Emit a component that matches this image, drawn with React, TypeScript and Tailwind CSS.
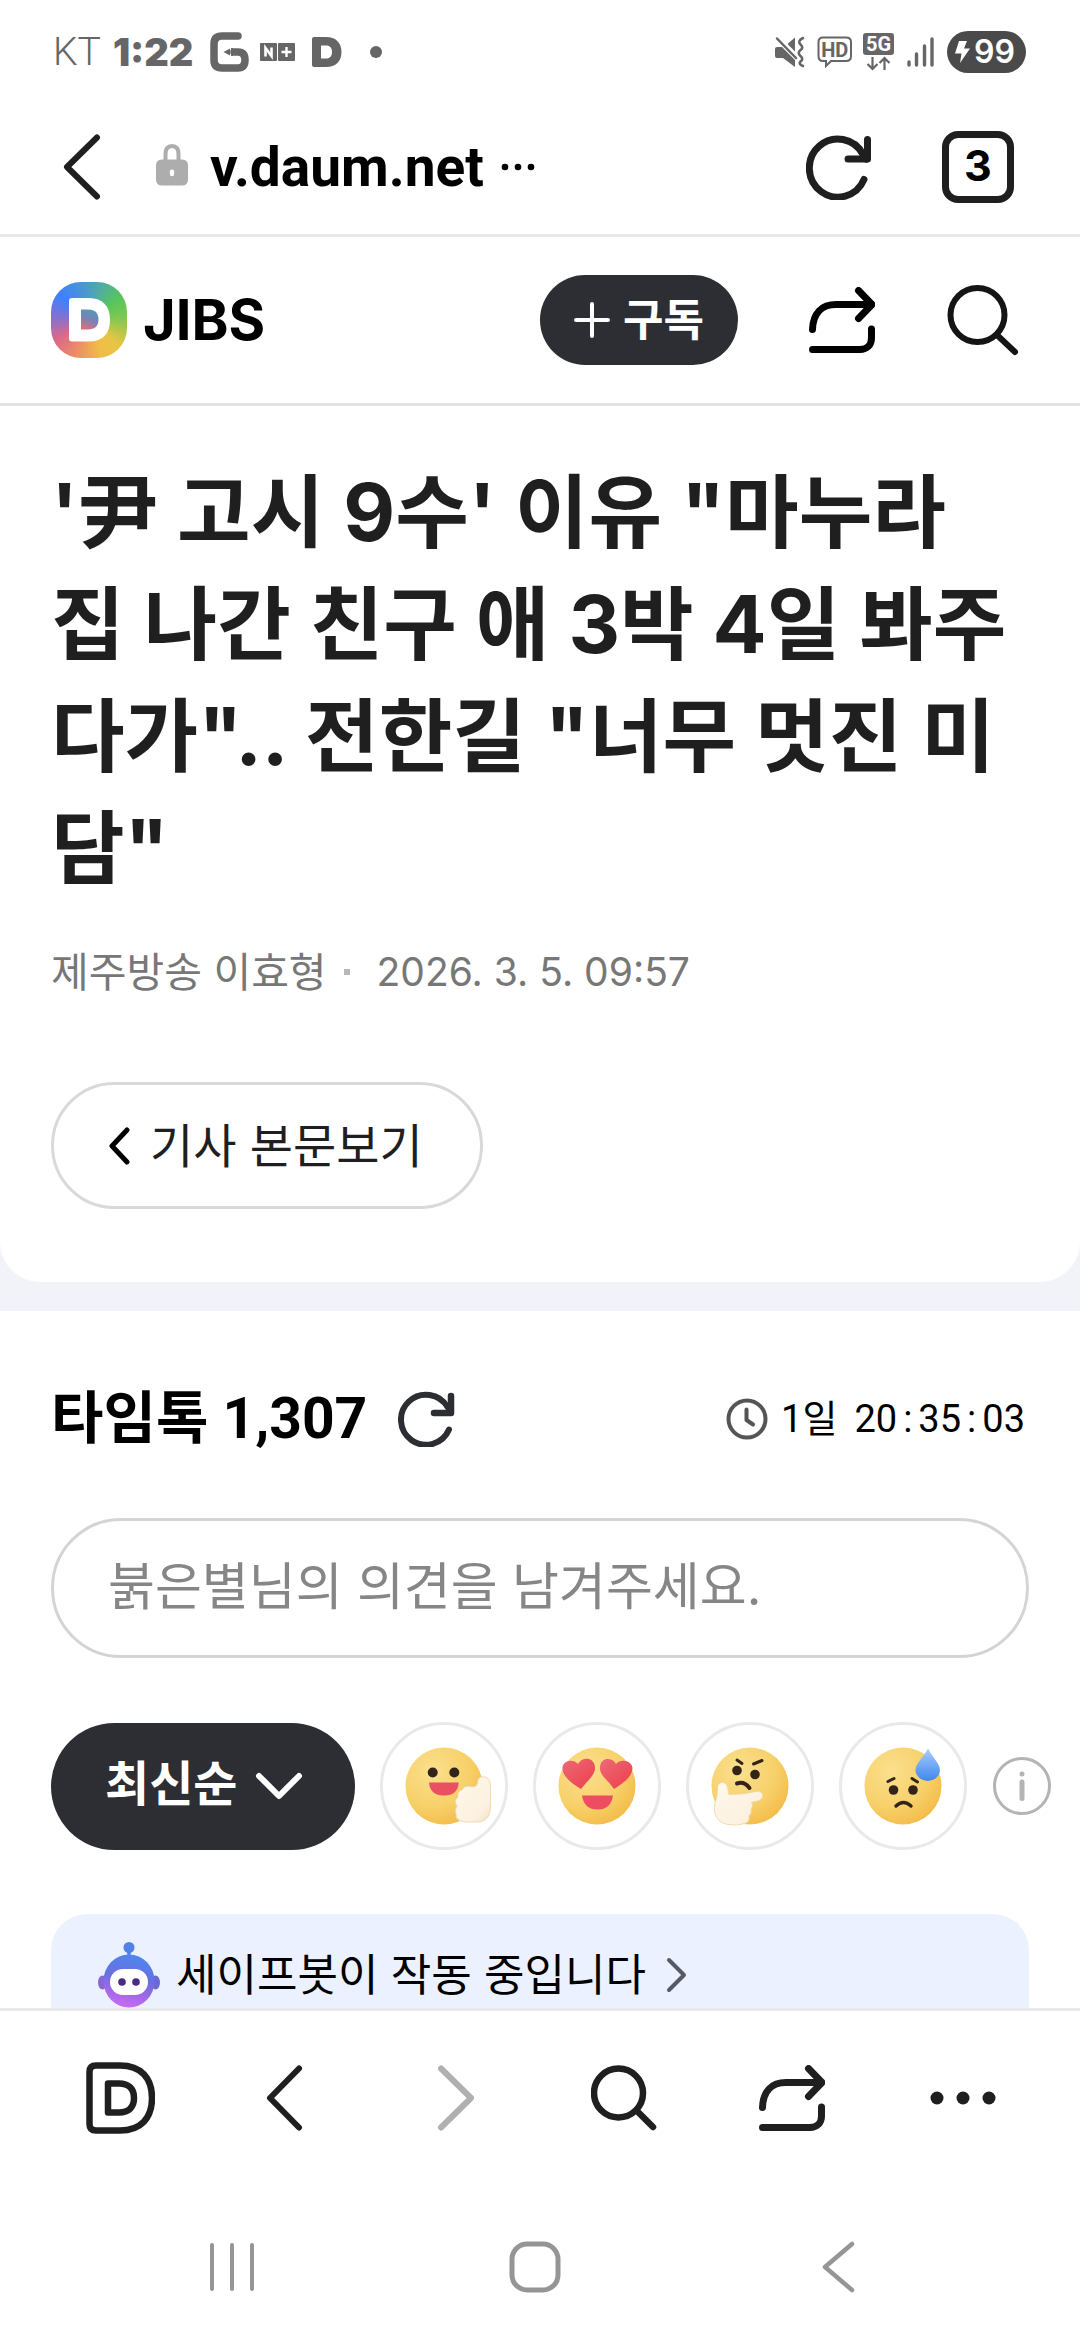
import React from "react";

type IconProps = { className?: string };

const SANS = "font-['Inter','Noto_Sans_CJK_KR',sans-serif]";
const ROBOTO = "font-['Roboto','Noto_Sans_CJK_KR',sans-serif]";

function Stroke({
  w,
  h,
  sw,
  className = "",
  children,
}: {
  w: number;
  h: number;
  sw: number;
  className?: string;
  children: React.ReactNode;
}) {
  return (
    <svg
      width={w}
      height={h}
      viewBox={`0 0 ${w} ${h}`}
      fill="none"
      stroke="currentColor"
      strokeWidth={sw}
      strokeLinecap="round"
      strokeLinejoin="round"
      className={`shrink-0 ${className}`}
      aria-hidden="true"
    >
      {children}
    </svg>
  );
}

function ReloadIcon() {
  return (
    <Stroke w={66} h={66} sw={7}>
      <path d="M58 45.5A28.5 29 0 1 1 57 20.500L60.500 25" />
      <path d="M61.500 5.500V25H42" />
    </Stroke>
  );
}

function ShareIcon({ className }: IconProps) {
  return (
    <Stroke w={66} h={66} sw={7} className={className}>
      <path d="M3.500 42.500C4 26 13 17.500 27 17.500H62" />
      <path d="M49.500 3.500L63 17.500L49.500 31.500" />
      <path d="M62.500 42V51C62.500 58 58 62.500 51 62.500H3.500" />
    </Stroke>
  );
}

function SearchIcon({ size }: { size: "lg" | "md" }) {
  if (size === "lg")
    return (
      <Stroke w={72} h={72} sw={6}>
        <circle cx="30.500" cy="31" r="27" />
        <path d="M50 51L68 68" />
      </Stroke>
    );
  return (
    <Stroke w={66} h={66} sw={6.5}>
      <circle cx="27.500" cy="28" r="24.500" />
      <path d="M46 46L62 62" />
    </Stroke>
  );
}

function StatusBar() {
  return (
    <div className={`flex h-[104px] shrink-0 items-center justify-between pl-[53px] pr-[54px] text-[#666666] ${ROBOTO}`}>
      <div className="flex items-center">
        <span className="text-[39px] font-light leading-[48px]">KT</span>
        <span className="ml-[12px] font-['Inter',sans-serif] text-[38px] font-black leading-[48px]">1:22</span>
        <svg width="40" height="40" viewBox="0 0 40 40" className="ml-[17px]" aria-hidden="true">
          <path d="M28 4H12Q4 4 4 12V28Q4 36 12 36H28Q35 36 35 28Q35 20 28 20H24" fill="none" stroke="currentColor" strokeWidth="7.500" strokeLinecap="round" />
          <path d="M13.500 20L20 16.500V23.500Z" fill="currentColor" />
          <path d="M22 16V24" stroke="currentColor" strokeWidth="2" strokeDasharray="2 1.500" />
        </svg>
        <svg width="36" height="18" viewBox="0 0 36 18" className="ml-[10px]" aria-hidden="true">
          <rect x="0" y="0" width="17" height="18" rx="1" fill="currentColor" />
          <rect x="18" y="0" width="17" height="18" rx="1" fill="currentColor" />
          <path d="M5.500 13.500V5L11.500 13V4.500" fill="none" stroke="#fff" strokeWidth="2.600" />
          <path d="M26.500 4V14M21.500 9H31.500" stroke="#fff" strokeWidth="2.400" />
        </svg>
        <svg width="30" height="30" viewBox="0 0 30 30" className="ml-[16px]" aria-hidden="true">
          <path fill="currentColor" fillRule="evenodd" d="M2 0H14C24 0 29.500 6 29.500 15S24 30 14 30H2Q0 30 0 28V2Q0 0 2 0ZM9 8.500V21.500H14C18 21.500 20 19 20 15S18 8.500 14 8.500Z" />
        </svg>
        <span className="ml-[28px] size-[12px] rounded-full bg-[#666666]" />
      </div>
      <div className="flex items-center">
        <svg width="31" height="32" viewBox="0 0 31 32" aria-hidden="true">
          <path fill="currentColor" d="M0 13Q0 11 2 11H7L20 24V31L8 22H2Q0 22 0 20ZM12.500 8L20 1.500V15.500Z" />
          <path d="M2 2.500L21 22" stroke="currentColor" strokeWidth="2.500" strokeLinecap="round" />
          <path d="M28 2Q22 5 25.500 8.500Q29 11.500 25.500 14Q22 17 25.500 20Q29 23 25.500 25.500Q23 28 28 30" fill="none" stroke="currentColor" strokeWidth="2.600" strokeLinecap="round" />
        </svg>
        <svg width="36" height="32" viewBox="0 0 36 32" className="ml-[11px]" aria-hidden="true">
          <path d="M6 1.500H29Q34 1.500 34 6V20Q34 25 29 25H14L9 30V25H6Q1.500 25 1.500 20V6Q1.500 1.500 6 1.500Z" fill="none" stroke="currentColor" strokeWidth="2" />
          <text x="17.800" y="20.500" textAnchor="middle" fontFamily="Roboto" fontWeight="700" fontSize="20" fill="currentColor">HD</text>
        </svg>
        <svg width="32" height="38" viewBox="0 0 32 38" className="ml-[10px]" aria-hidden="true">
          <rect x="0" y="0" width="31" height="22" rx="3" fill="currentColor" />
          <text x="15.500" y="18" textAnchor="middle" fontFamily="Roboto" fontWeight="700" fontSize="20" fill="#fff">5G</text>
          <path d="M9.500 24V36M4.500 31L9.500 36L14.500 31M21.500 37V25M16.500 30L21.500 25L26.500 30" fill="none" stroke="currentColor" strokeWidth="2.200" />
        </svg>
        <svg width="28" height="30" viewBox="0 0 28 30" className="ml-[12px]" aria-hidden="true">
          <path d="M2 25V28M9.500 17V28M17.500 9V28M25 2V28" stroke="currentColor" strokeWidth="3.400" strokeLinecap="round" />
        </svg>
        <span className="ml-[12px] flex h-[42px] items-center gap-1 rounded-full bg-[#4a4a4a] pl-2 pr-[11px] text-white">
          <svg width="15" height="22" viewBox="0 0 15 22" aria-hidden="true">
            <path fill="currentColor" d="M4 0H12L9 7.500H15L5 22L6.500 12.500H0Z" />
          </svg>
          <span className="font-['Inter',sans-serif] text-[32px] font-semibold leading-[42px]">99</span>
        </span>
      </div>
    </div>
  );
}

function UrlBar() {
  return (
    <nav aria-label="주소창" className="flex h-[133px] shrink-0 items-center border-b-[3px] border-[#e9e9e9] pb-1 pl-[62px] pr-[66px] text-[#1f1f1f]">
      <button type="button" aria-label="뒤로">
        <Stroke w={40} h={66} sw={6}>
          <path d="M35 3.500L5 33L35 62.500" />
        </Stroke>
      </button>
      <svg width="32" height="42" viewBox="0 0 32 42" className="ml-[54px] mt-[-4px] shrink-0" aria-hidden="true">
        <path d="M9.500 18V10Q9.500 2 16 2T22.500 10V18" fill="none" stroke="#adadad" strokeWidth="4" />
        <path fillRule="evenodd" fill="#adadad" d="M6 15.500H26Q32 15.500 32 21.500V35.500Q32 41.500 26 41.500H6Q0 41.500 0 35.500V21.500Q0 15.500 6 15.500ZM16 25.500A2.200 2.200 0 0 0 13.800 27.700V30A2.200 2.200 0 0 0 18.200 30V27.700A2.200 2.200 0 0 0 16 25.500Z" />
      </svg>
      <button type="button" className={`ml-[22px] flex items-center gap-[17px] text-[55px] font-bold leading-[64px] text-black ${ROBOTO}`}>
        v.daum.net
        <svg width="34" height="8" viewBox="0 0 34 8" aria-label="주소 더보기">
          <circle cx="4" cy="4" r="3.300" />
          <circle cx="17" cy="4" r="3.300" />
          <circle cx="30" cy="4" r="3.300" />
        </svg>
      </button>
      <button type="button" aria-label="새로고침" className="ml-auto">
        <ReloadIcon />
      </button>
      <button type="button" aria-label="탭 3개" className="ml-[70px] flex size-[72px] items-center justify-center rounded-[16px] border-[7px] border-[#1f1f1f] pb-[3px] font-['Inter',sans-serif] text-[43px] font-bold leading-none text-black">
        3
      </button>
    </nav>
  );
}

function SiteHeader() {
  return (
    <header className={`flex h-[169px] shrink-0 items-center border-b-[3px] border-[#e2e2e2] pl-[51px] pr-[61px] text-black ${SANS}`}>
      <a href="#home" className="flex items-center gap-[16px]" aria-label="다음 JIBS">
        <span className="flex size-[76px] items-center justify-center rounded-[30px] bg-[conic-gradient(from_0deg,#4b9dc8,#58c65c_55deg,#7cc850_85deg,#e8c544_130deg,#f0bc48_160deg,#ec8a68_205deg,#d9688a_240deg,#8a70cc_272deg,#3f80ff_310deg,#4b9dc8_360deg)]">
          <svg width="42" height="44" viewBox="0 0 42 44" className="ml-px" aria-hidden="true">
            <defs>
              <linearGradient id="logo-core" x1="0.700" y1="0" x2="0.400" y2="1">
                <stop offset="0" stopColor="#4f9cb4" />
                <stop offset="0.550" stopColor="#7f7fb4" />
                <stop offset="1" stopColor="#d8707c" />
              </linearGradient>
            </defs>
            <path fill="#fff" d="M3 0H20C34 0 41 8.500 41 22S34 43.500 20 43.500H3Q0 43.500 0 40.500V3Q0 0 3 0Z" />
            <path fill="url(#logo-core)" d="M12 11.500V31.500H19C26 31.500 29.500 28 29.500 21.500S26 11.500 19 11.500Z" />
          </svg>
        </span>
        <span className="text-[56px] font-bold leading-[72px]">JIBS</span>
      </a>
      <button type="button" className="ml-auto flex h-[90px] items-center gap-[13px] rounded-full bg-[#2d2e34] px-[34px] text-white">
        <Stroke w={36} h={36} sw={4}>
          <path d="M18 2V34M2 18H34" />
        </Stroke>
        <span className="text-[44px] font-bold leading-[60px]">구독</span>
      </button>
      <button type="button" aria-label="공유" className="ml-[71px]">
        <ShareIcon />
      </button>
      <button type="button" aria-label="검색" className="ml-[72px] text-[#141414]">
        <SearchIcon size="lg" />
      </button>
    </header>
  );
}

function Article() {
  return (
    <article className={`rounded-b-[40px] bg-white px-[51px] pb-[73px] pt-[50px] text-[#1f1f1f] ${SANS}`}>
      <h1 className="whitespace-nowrap text-[80px] font-bold leading-[112px]">
        '尹 고시 9수' 이유 "마누라
        <br />집 나간 친구 애 3박 4일 봐주
        <br />다가".. 전한길 "너무 멋진 미
        <br />담"
      </h1>
      <p className="mt-[44px] flex items-center leading-[48px] text-[#777777]">
        <span className="text-[41px]">제주방송 이효형</span>
        <span className="ml-[17px] mr-[27px] size-[6px] bg-[#b8b8b8]" />
        <time className="text-[39px]">2026. 3. 5. 09:57</time>
      </p>
      <a href="#article" className="mt-[86px] flex h-[127px] w-fit items-center gap-[20px] rounded-full border-[3px] border-[#d9d9d9] pl-[54px] pr-[57px] text-[47px] leading-[60px]">
        <Stroke w={22} h={38} sw={5} className="text-black">
          <path d="M19 3L4 19L19 35" />
        </Stroke>
        기사 본문보기
      </a>
    </article>
  );
}

function Face({ id, children }: { id: string; children: React.ReactNode }) {
  return (
    <svg width="88" height="84" viewBox="0 0 88 84" className="overflow-visible" aria-hidden="true">
      <defs>
        <radialGradient id={`${id}-face`} cx="0.350" cy="0.300" r="0.800">
          <stop offset="0" stopColor="#fbe08e" />
          <stop offset="0.600" stopColor="#f7d069" />
          <stop offset="1" stopColor="#f3b844" />
        </radialGradient>
        <linearGradient id={`${id}-hand`} x1="0" y1="0" x2="1" y2="1">
          <stop offset="0" stopColor="#fff8ec" />
          <stop offset="0.750" stopColor="#fcf1e0" />
          <stop offset="1" stopColor="#f0dfc2" />
        </linearGradient>
        <linearGradient id={`${id}-heart`} x1="0" y1="0" x2="1" y2="1">
          <stop offset="0" stopColor="#ec6a78" />
          <stop offset="1" stopColor="#ee3d4a" />
        </linearGradient>
        <linearGradient id={`${id}-drop`} x1="0" y1="0" x2="0" y2="1">
          <stop offset="0" stopColor="#a9cffa" />
          <stop offset="1" stopColor="#3f87ee" />
        </linearGradient>
      </defs>
      <circle cx="44" cy="42" r="38.500" fill={`url(#${id}-face)`} />
      {children}
    </svg>
  );
}

function ThumbFace() {
  return (
    <Face id="thumb">
      <circle cx="32.700" cy="28.500" r="5" fill="#33241a" />
      <circle cx="54.300" cy="28.500" r="5" fill="#33241a" />
      <path d="M29 38.500H58.700Q58 51.500 44 51.500T29 38.500Z" fill="#ea4f62" />
      <path d="M77.500 38C77.500 30.500 90.500 30.500 90.500 41V63C90.500 73 85 78 77 78H65Q55 76.500 56 70Q54 66 57 62Q53 57 58 53Q57 47 62 46Q64 41 71 42.500Q77 44 77.500 38Z" fill="url(#thumb-hand)" stroke="#ecd3a4" strokeWidth="0.800" />
    </Face>
  );
}

function LoveFace() {
  return (
    <Face id="love">
      <path d="M28 45C16 38 9 31 9.500 23.500C10 17 20 14 25 20C29 12.500 41 13 42 23C42.500 31 35 36 28 45Z" fill="url(#love-heart)" />
      <path d="M61 45C55 36 46 31 47 23C48 13 59 13 63 20C68 14 79 17 79.500 24C79.500 32 72 38 61 45Z" fill="url(#love-heart)" />
      <path d="M29 51.500H60Q58 65.500 44.500 65.500T29 51.500Z" fill="#ee4c60" />
    </Face>
  );
}

function ThinkFace() {
  return (
    <Face id="think">
      <path d="M31 16L36 19.500M47.500 20L56 16.500" stroke="#33241a" strokeWidth="3" strokeLinecap="round" />
      <circle cx="31" cy="26.500" r="4.800" fill="#33241a" />
      <circle cx="49" cy="30.500" r="4.800" fill="#33241a" />
      <path d="M31 39.500Q38 37 43.500 44" fill="none" stroke="#33241a" strokeWidth="4" strokeLinecap="round" />
      <path d="M11.500 43C12 37 21 37 21.500 43L23 50.500Q38 50.500 50 47.500C57 46 59.500 54 53 56.500L45.500 58.500Q48 62 45 65Q46.500 69 43 72Q44 78 39 79.500Q31 82 22 80.500C11 79 7 70 8.700 60Q12 52 11.500 43Z" fill="url(#think-hand)" stroke="#ecd3a4" strokeWidth="0.800" />
    </Face>
  );
}

function SadFace() {
  return (
    <Face id="sad">
      <path d="M29 37.500L35 34.500M53 34.500L58.500 38" stroke="#33241a" strokeWidth="3" strokeLinecap="round" />
      <circle cx="34.500" cy="46" r="4.800" fill="#33241a" />
      <circle cx="54" cy="46" r="4.800" fill="#33241a" />
      <path d="M37 62Q44.500 55 52 62" fill="none" stroke="#33241a" strokeWidth="3.400" strokeLinecap="round" />
      <path d="M69 4.500C73 13 81 19 81 26.500A12.300 11.500 0 0 1 56.500 26.500C56.500 19 65 13 69 4.500Z" fill="url(#sad-drop)" />
    </Face>
  );
}

const reactions = [
  { label: "추천해요", Icon: ThumbFace },
  { label: "좋아요", Icon: LoveFace },
  { label: "글쎄요", Icon: ThinkFace },
  { label: "슬퍼요", Icon: SadFace },
];

function Robot() {
  return (
    <svg width="64" height="68" viewBox="0 0 64 68" className="shrink-0" aria-hidden="true">
      <defs>
        <linearGradient id="robot" x1="0.600" y1="0" x2="0.400" y2="1">
          <stop offset="0" stopColor="#4f86ee" />
          <stop offset="0.450" stopColor="#6a6fe0" />
          <stop offset="0.750" stopColor="#a468e8" />
          <stop offset="1" stopColor="#cd6af6" />
        </linearGradient>
      </defs>
      <path d="M32 7V16" stroke="#5a7fe6" strokeWidth="3.500" />
      <circle cx="32" cy="6.500" r="5.500" fill="#5180e6" />
      <ellipse cx="5.500" cy="41.500" rx="4.500" ry="7" fill="#8a66d4" />
      <ellipse cx="58.500" cy="41.500" rx="4.500" ry="7" fill="#6a6ad4" />
      <ellipse cx="32" cy="40" rx="25.500" ry="26.500" fill="url(#robot)" />
      <rect x="13" y="28" width="38" height="26" rx="13" fill="#fff" />
      <circle cx="25" cy="41" r="3.800" fill="#4b2a82" />
      <circle cx="39" cy="41" r="3.800" fill="#4b2a82" />
    </svg>
  );
}

function TimeTalk() {
  return (
    <section className={`mt-[29px] min-h-0 flex-1 overflow-hidden bg-white pt-[72px] ${SANS}`}>
      <div className="flex h-[72px] items-center px-[51px] text-black">
        <h2 className={`text-[57px] font-bold leading-[72px] ${ROBOTO}`}>타임톡 1,307</h2>
        <button type="button" aria-label="댓글 새로고침" className="ml-[31px] text-[#2d2e34]">
          <Stroke w={58} h={56} sw={6}>
            <path d="M51 38.500A25 25 0 1 1 49.500 16" />
            <path d="M53 5V22H36" strokeWidth="6.500" />
          </Stroke>
        </button>
        <p className={`ml-auto mr-1 flex items-center text-[38px] leading-[52px] ${ROBOTO}`}>
          <Stroke w={42} h={42} sw={4} className="mr-[13px] text-[#555555]">
            <circle cx="21" cy="21" r="18.500" />
            <path d="M20.500 11.500V22L27 26.500" />
          </Stroke>
          <span className="mr-[17px]">1일</span>
          <time className="flex gap-[6px]">
            <span>20</span>
            <span>:</span>
            <span>35</span>
            <span>:</span>
            <span>03</span>
          </time>
        </p>
      </div>
      <div className="mt-[63px] px-[51px]">
        <input
          type="text"
          aria-label="의견 입력"
          placeholder="붉은별님의 의견을 남겨주세요."
          className="h-[140px] w-full rounded-full border-[3px] border-[#d4d4d4] px-[54px] pb-1 text-[51px] text-[#1f1f1f] outline-none placeholder:text-[#868686]"
        />
      </div>
      <div className="mt-[64px] flex items-center pl-[51px]">
        <div className="relative mr-[25px] h-[127px] w-[304px] shrink-0 text-white">
          <select aria-label="정렬" className="h-full w-full appearance-none rounded-full bg-[#2d2e34] pb-1 pl-[54px] text-[48px] font-bold outline-none">
            <option>최신순</option>
          </select>
          <Stroke w={48} h={30} sw={6} className="pointer-events-none absolute right-[52px] top-[48px]">
            <path d="M4 5L24 25L44 5" />
          </Stroke>
        </div>
        <div className="flex shrink-0 gap-[25px]">
          {reactions.map(({ label, Icon }) => (
            <button key={label} type="button" aria-label={label} className="flex size-[128px] items-center justify-center rounded-full border-[3px] border-[#e9e9e9]">
              <Icon />
            </button>
          ))}
        </div>
        <button type="button" aria-label="안내" className="ml-[25px] shrink-0 text-[#b4b4b4]">
          <Stroke w={60} h={60} sw={3}>
            <circle cx="30" cy="30" r="27.500" />
            <path d="M30 26V42.500" strokeWidth="5" />
            <circle cx="30" cy="18" r="2.500" fill="currentColor" stroke="none" />
          </Stroke>
        </button>
      </div>
      <div className="mx-[51px] mt-[64px] rounded-[36px] bg-[#ebf1fe] pb-[40px] pl-[46px] pt-[27px]">
        <a href="#safebot" className="flex items-center text-[44px] leading-[68px] text-black">
          <Robot />
          <span className="ml-[15px]">세이프봇이 작동 중입니다</span>
          <Stroke w={22} h={36} sw={4} className="ml-[20px] text-[#555a66]">
            <path d="M3 3L18 18L3 33" />
          </Stroke>
        </a>
      </div>
    </section>
  );
}

function BottomBar() {
  return (
    <nav aria-label="도구 모음" className="grid h-[176px] shrink-0 grid-cols-6 place-items-center border-t-[3px] border-[#eaeaea] bg-white px-[36px] text-[#1f1f1f]">
      <button type="button" aria-label="다음 홈">
        <Stroke w={70} h={72} sw={6.5}>
          <path d="M11 3.500H35C56 3.500 67 16 67 36S56 68.500 35 68.500H11Q4.500 68.500 4.500 62V10Q4.500 3.500 11 3.500Z" />
          <path d="M23 21.500H34C44 21.500 49 27 49 36S44 50.500 34 50.500H23Z" />
        </Stroke>
      </button>
      <button type="button" aria-label="이전">
        <Stroke w={44} h={66} sw={6}>
          <path d="M33 3.500L4 33L33 62.500" />
        </Stroke>
      </button>
      <button type="button" aria-label="앞으로" className="text-[#b0b0b0]">
        <Stroke w={38} h={66} sw={6}>
          <path d="M4 3.500L34 33L4 62.500" />
        </Stroke>
      </button>
      <button type="button" aria-label="검색">
        <SearchIcon size="md" />
      </button>
      <button type="button" aria-label="공유">
        <ShareIcon />
      </button>
      <button type="button" aria-label="더보기">
        <svg width="72" height="14" viewBox="0 0 72 14" fill="currentColor" aria-hidden="true">
          <circle cx="13" cy="7" r="6.500" />
          <circle cx="39" cy="7" r="6.500" />
          <circle cx="65" cy="7" r="6.500" />
        </svg>
      </button>
    </nav>
  );
}

function SystemNav() {
  return (
    <nav aria-label="시스템" className="grid h-[156px] shrink-0 grid-cols-3 place-items-center bg-white pl-[80px] pr-[90px] pt-[10px] text-[#959595]">
      <button type="button" aria-label="최근 앱">
        <Stroke w={48} h={50} sw={4}>
          <path d="M4 3V47M24 3V47M44 3V47" />
        </Stroke>
      </button>
      <button type="button" aria-label="홈">
        <Stroke w={52} h={52} sw={5}>
          <rect x="3" y="3" width="46" height="46" rx="15" />
        </Stroke>
      </button>
      <button type="button" aria-label="뒤로 가기">
        <Stroke w={34} h={52} sw={4.5}>
          <path d="M31 3L4 26L31 49" />
        </Stroke>
      </button>
    </nav>
  );
}

export default function App() {
  return (
    <div className="flex h-screen flex-col overflow-hidden bg-white">
      <StatusBar />
      <UrlBar />
      <SiteHeader />
      <main className="flex min-h-0 flex-1 flex-col bg-[#f1f3f9]">
        <Article />
        <TimeTalk />
      </main>
      <BottomBar />
      <SystemNav />
    </div>
  );
}
